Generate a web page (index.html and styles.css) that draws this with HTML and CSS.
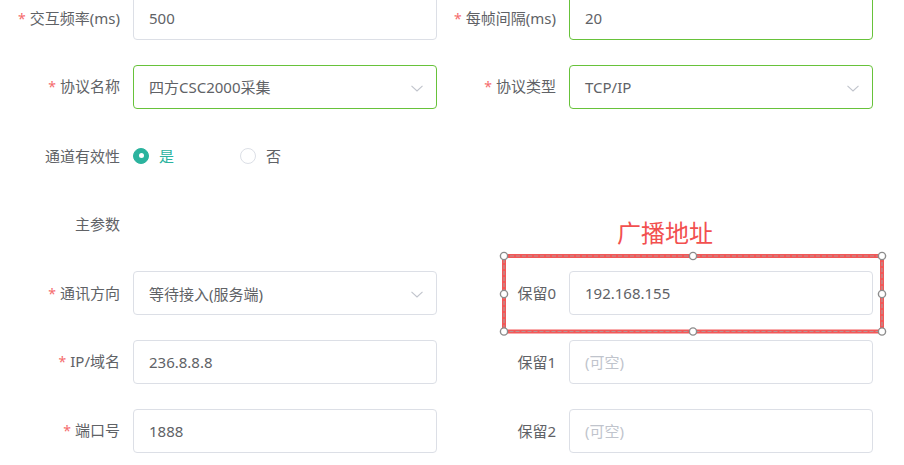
FILE: index.html
```html
<!DOCTYPE html>
<html lang="zh-CN">
<head>
<meta charset="utf-8">
<title>通道配置</title>
<link rel="stylesheet" href="styles.css">
</head>
<body>
<div class="page">
  <form class="form">
    <div class="item">
      <label class="label req">交互频率(ms)</label>
      <div class="input"><span class="val">500</span></div>
    </div>
    <div class="item">
      <label class="label req">每帧间隔(ms)</label>
      <div class="input active"><span class="val">20</span></div>
    </div>

    <div class="item">
      <label class="label req">协议名称</label>
      <div class="input select active"><span class="val">四方CSC2000采集</span>
        <svg class="arrow" width="12" height="7" viewBox="0 0 12 7"><path d="M0.5 0.8 L6 6 L11.5 0.8" fill="none" stroke="#c0c4cc" stroke-width="1.1"/></svg>
      </div>
    </div>
    <div class="item">
      <label class="label req">协议类型</label>
      <div class="input select active"><span class="val">TCP/IP</span>
        <svg class="arrow" width="12" height="7" viewBox="0 0 12 7"><path d="M0.5 0.8 L6 6 L11.5 0.8" fill="none" stroke="#c0c4cc" stroke-width="1.1"/></svg>
      </div>
    </div>

    <div class="item">
      <label class="label">通道有效性</label>
      <div class="radios">
        <span class="radio checked"><span class="dot"></span><span class="rtext">是</span></span>
        <span class="radio"><span class="dot"></span><span class="rtext">否</span></span>
      </div>
    </div>
    <div class="item"></div>

    <div class="item">
      <label class="label">主参数</label>
    </div>
    <div class="item"></div>

    <div class="item">
      <label class="label req">通讯方向</label>
      <div class="input select"><span class="val">等待接入(服务端)</span>
        <svg class="arrow" width="12" height="7" viewBox="0 0 12 7"><path d="M0.5 0.8 L6 6 L11.5 0.8" fill="none" stroke="#c0c4cc" stroke-width="1.1"/></svg>
      </div>
    </div>
    <div class="item">
      <label class="label">保留0</label>
      <div class="input"><span class="val">192.168.155</span></div>
    </div>

    <div class="item">
      <label class="label req">IP/域名</label>
      <div class="input"><span class="val">236.8.8.8</span></div>
    </div>
    <div class="item">
      <label class="label">保留1</label>
      <div class="input"><span class="ph">(可空)</span></div>
    </div>

    <div class="item">
      <label class="label req">端口号</label>
      <div class="input"><span class="val">1888</span></div>
    </div>
    <div class="item">
      <label class="label">保留2</label>
      <div class="input"><span class="ph">(可空)</span></div>
    </div>
  </form>

  <div class="note">广播地址</div>
  <svg class="mark" width="904" height="465" viewBox="0 0 904 465">
    <rect x="504" y="256" width="378" height="75.5" fill="none" stroke="#f25858" stroke-width="4"/>
    <rect x="504" y="256" width="378" height="75.5" fill="none" stroke="#b79494" stroke-width="1.2" stroke-dasharray="4 2"/>
    <g fill="#fff" stroke="#8c8c8c" stroke-width="1.4">
      <circle cx="504" cy="256" r="3.6"/>
      <circle cx="693" cy="256" r="3.6"/>
      <circle cx="882" cy="256" r="3.6"/>
      <circle cx="504" cy="294" r="3.6"/>
      <circle cx="882" cy="294" r="3.6"/>
      <circle cx="504" cy="331.5" r="3.6"/>
      <circle cx="693" cy="331.5" r="3.6"/>
      <circle cx="882" cy="331.5" r="3.6"/>
    </g>
  </svg>
</div>
</body>
</html>
```

FILE: styles.css
```css
* { box-sizing: border-box; }
html, body {
  margin: 0;
  padding: 0;
  background: #fff;
}
body {
  font-family: "Noto Sans", "Noto Sans CJK SC", sans-serif;
  font-size: 15px;
  color: #606266;
  overflow: hidden;
}
.page {
  position: relative;
  width: 904px;
  height: 465px;
  overflow: hidden;
}
.form {
  display: grid;
  grid-template-columns: 437px 436px;
  row-gap: 24.8px;
  margin: -4px 0 0 0;
}
.item {
  display: flex;
  align-items: center;
  height: 44px;
}
.label {
  flex: 0 0 133px;
  text-align: right;
  padding-right: 13px;
  color: #606266;
  white-space: nowrap;
  line-height: 20px;
}
.item:nth-child(even) .label { flex-basis: 132px; }
.label.req::before {
  content: "*";
  color: #f56c6c;
  margin-right: 4px;
  font-size: 14px;
}
.input {
  position: relative;
  flex: 0 0 304px;
  height: 44px;
  border: 1px solid #dcdfe6;
  border-radius: 4px;
  padding: 0 15px;
  display: flex;
  align-items: center;
  background: #fff;
}
.input.active { border-color: #67c23a; }
.val { color: #606266; }
.ph { color: #c0c4cc; }
.arrow {
  position: absolute;
  right: 13px;
  top: 19px;
}
.radios {
  flex: 0 0 304px;
  display: flex;
  align-items: center;
  gap: 66px;
}
.radio {
  display: inline-flex;
  align-items: center;
  gap: 10px;
}
.dot {
  width: 16px;
  height: 16px;
  border-radius: 50%;
  border: 1px solid #dcdfe6;
  background: #fff;
  display: inline-flex;
  align-items: center;
  justify-content: center;
}
.radio.checked .dot {
  background: #2bb39e;
  border-color: #2bb39e;
}
.radio.checked .dot::after {
  content: "";
  width: 5px;
  height: 5px;
  border-radius: 50%;
  background: #fff;
}
.radio.checked .rtext { color: #2bb39e; }
.note {
  position: absolute;
  left: 617px;
  top: 220px;
  font-family: "Noto Sans CJK SC", sans-serif;
  font-size: 24px;
  line-height: 24px;
  color: #f2504f;
}
.mark {
  position: absolute;
  left: 0;
  top: 0;
  pointer-events: none;
}
```
